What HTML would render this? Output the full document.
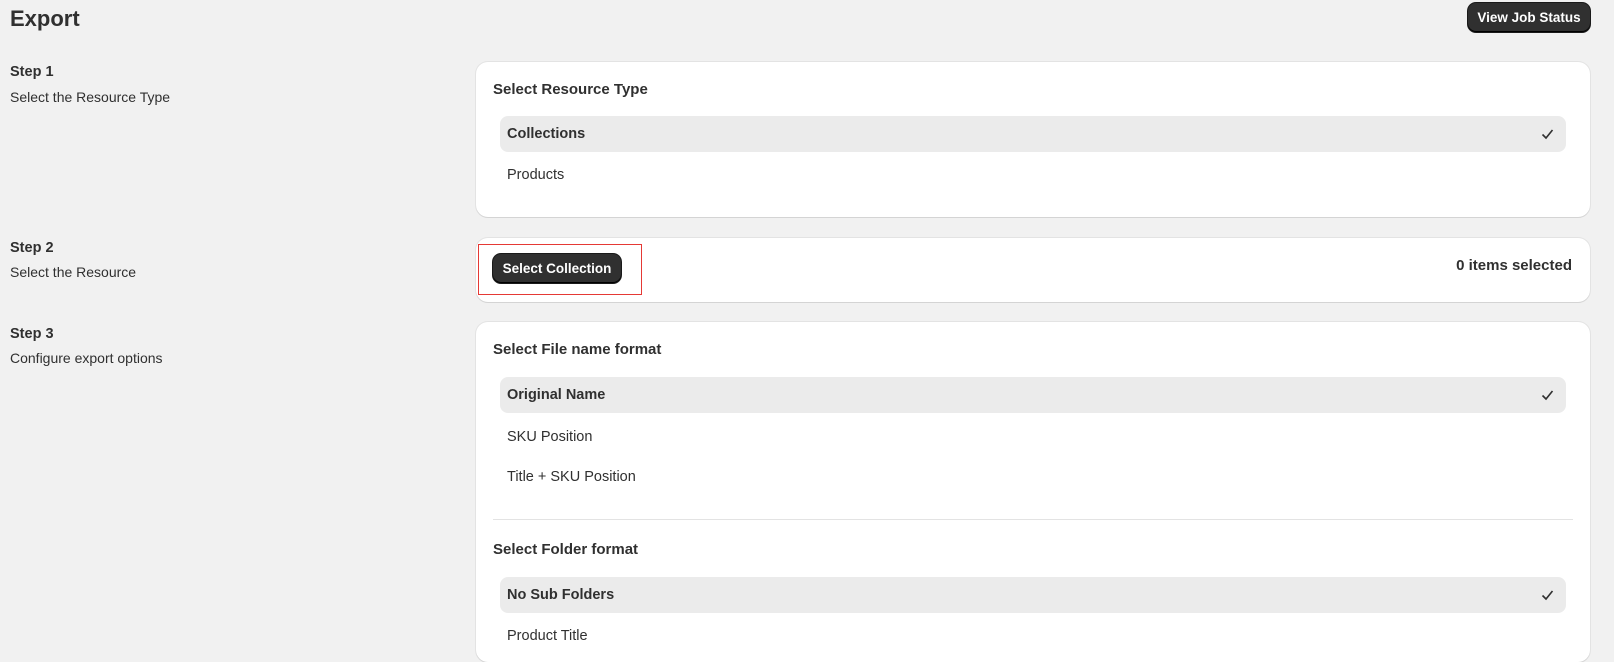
<!DOCTYPE html>
<html><head><style>
*{box-sizing:border-box;margin:0;padding:0}
body{width:1614px;height:633px;overflow:hidden;background:#f1f1f1;font-family:"Liberation Sans",sans-serif;color:#303030;font-size:14px;position:relative}
.a{position:absolute;line-height:20px;white-space:nowrap}
.b{font-weight:bold}
.btn{position:absolute;background:#303030;color:#fff;font-weight:bold;font-size:13.5px;border-radius:8px;box-shadow:inset 0 -1px 0 #000,0 0 0 1px #1a1a1a;display:flex;align-items:center;justify-content:center}
.card{position:absolute;left:476px;width:1114px;background:#fff;border-radius:12px;box-shadow:0 1px 0 #d4d4d4,0 0 0 1px #e3e3e3}
.opt{position:absolute;left:24px;right:24px;height:36px;line-height:36px;padding-left:7px;border-radius:8px;font-size:14.5px}
.opt.sel{background:#ebebeb;font-weight:bold}
.chk{position:absolute;right:12px;top:12px}
.t{position:absolute;left:17px;font-weight:bold;font-size:15px;line-height:20px}
</style></head><body>
<div class="a b" style="left:10px;top:7px;font-size:22px;line-height:24px">Export</div>
<div class="btn" style="left:1468px;top:3px;width:122px;height:29px">View Job Status</div>

<div class="a b" style="left:10px;top:62px;font-size:14.5px">Step 1</div>
<div class="a" style="left:10px;top:87px">Select the Resource Type</div>
<div class="a b" style="left:10px;top:238px;font-size:14.5px">Step 2</div>
<div class="a" style="left:10px;top:262px">Select the Resource</div>
<div class="a b" style="left:10px;top:324px;font-size:14.5px">Step 3</div>
<div class="a" style="left:10px;top:348px">Configure export options</div>

<div class="card" style="top:62px;height:155px">
 <div class="t" style="top:18px">Select Resource Type</div>
 <div class="opt sel" style="top:54px">Collections<svg class="chk" width="13" height="12" viewBox="0 0 13 12"><path d="M1.5 6.5l3.5 3.5 6.5-8" stroke="#303030" stroke-width="1.6" fill="none"/></svg></div>
 <div class="opt" style="top:95px">Products</div>
</div>

<div class="card" style="top:238px;height:64px">
 <div class="btn" style="left:17px;top:16px;width:128px;height:29px">Select Collection</div>
 <div class="a b" style="right:18px;top:18px;font-size:15px">0 items selected</div>
</div>
<div class="a" style="left:478px;top:244px;width:164px;height:51px;border:1.5px solid #e53935"></div>

<div class="card" style="top:322px;height:340px">
 <div class="t" style="top:18px">Select File name format</div>
 <div class="opt sel" style="top:55px">Original Name<svg class="chk" width="13" height="12" viewBox="0 0 13 12"><path d="M1.5 6.5l3.5 3.5 6.5-8" stroke="#303030" stroke-width="1.6" fill="none"/></svg></div>
 <div class="opt" style="top:97px">SKU Position</div>
 <div class="opt" style="top:137px">Title + SKU Position</div>
 <div class="a" style="left:17px;right:17px;top:197px;height:1px;background:#e3e3e3"></div>
 <div class="t" style="top:218px">Select Folder format</div>
 <div class="opt sel" style="top:255px">No Sub Folders<svg class="chk" width="13" height="12" viewBox="0 0 13 12"><path d="M1.5 6.5l3.5 3.5 6.5-8" stroke="#303030" stroke-width="1.6" fill="none"/></svg></div>
 <div class="opt" style="top:296px">Product Title</div>
</div>
</body></html>
